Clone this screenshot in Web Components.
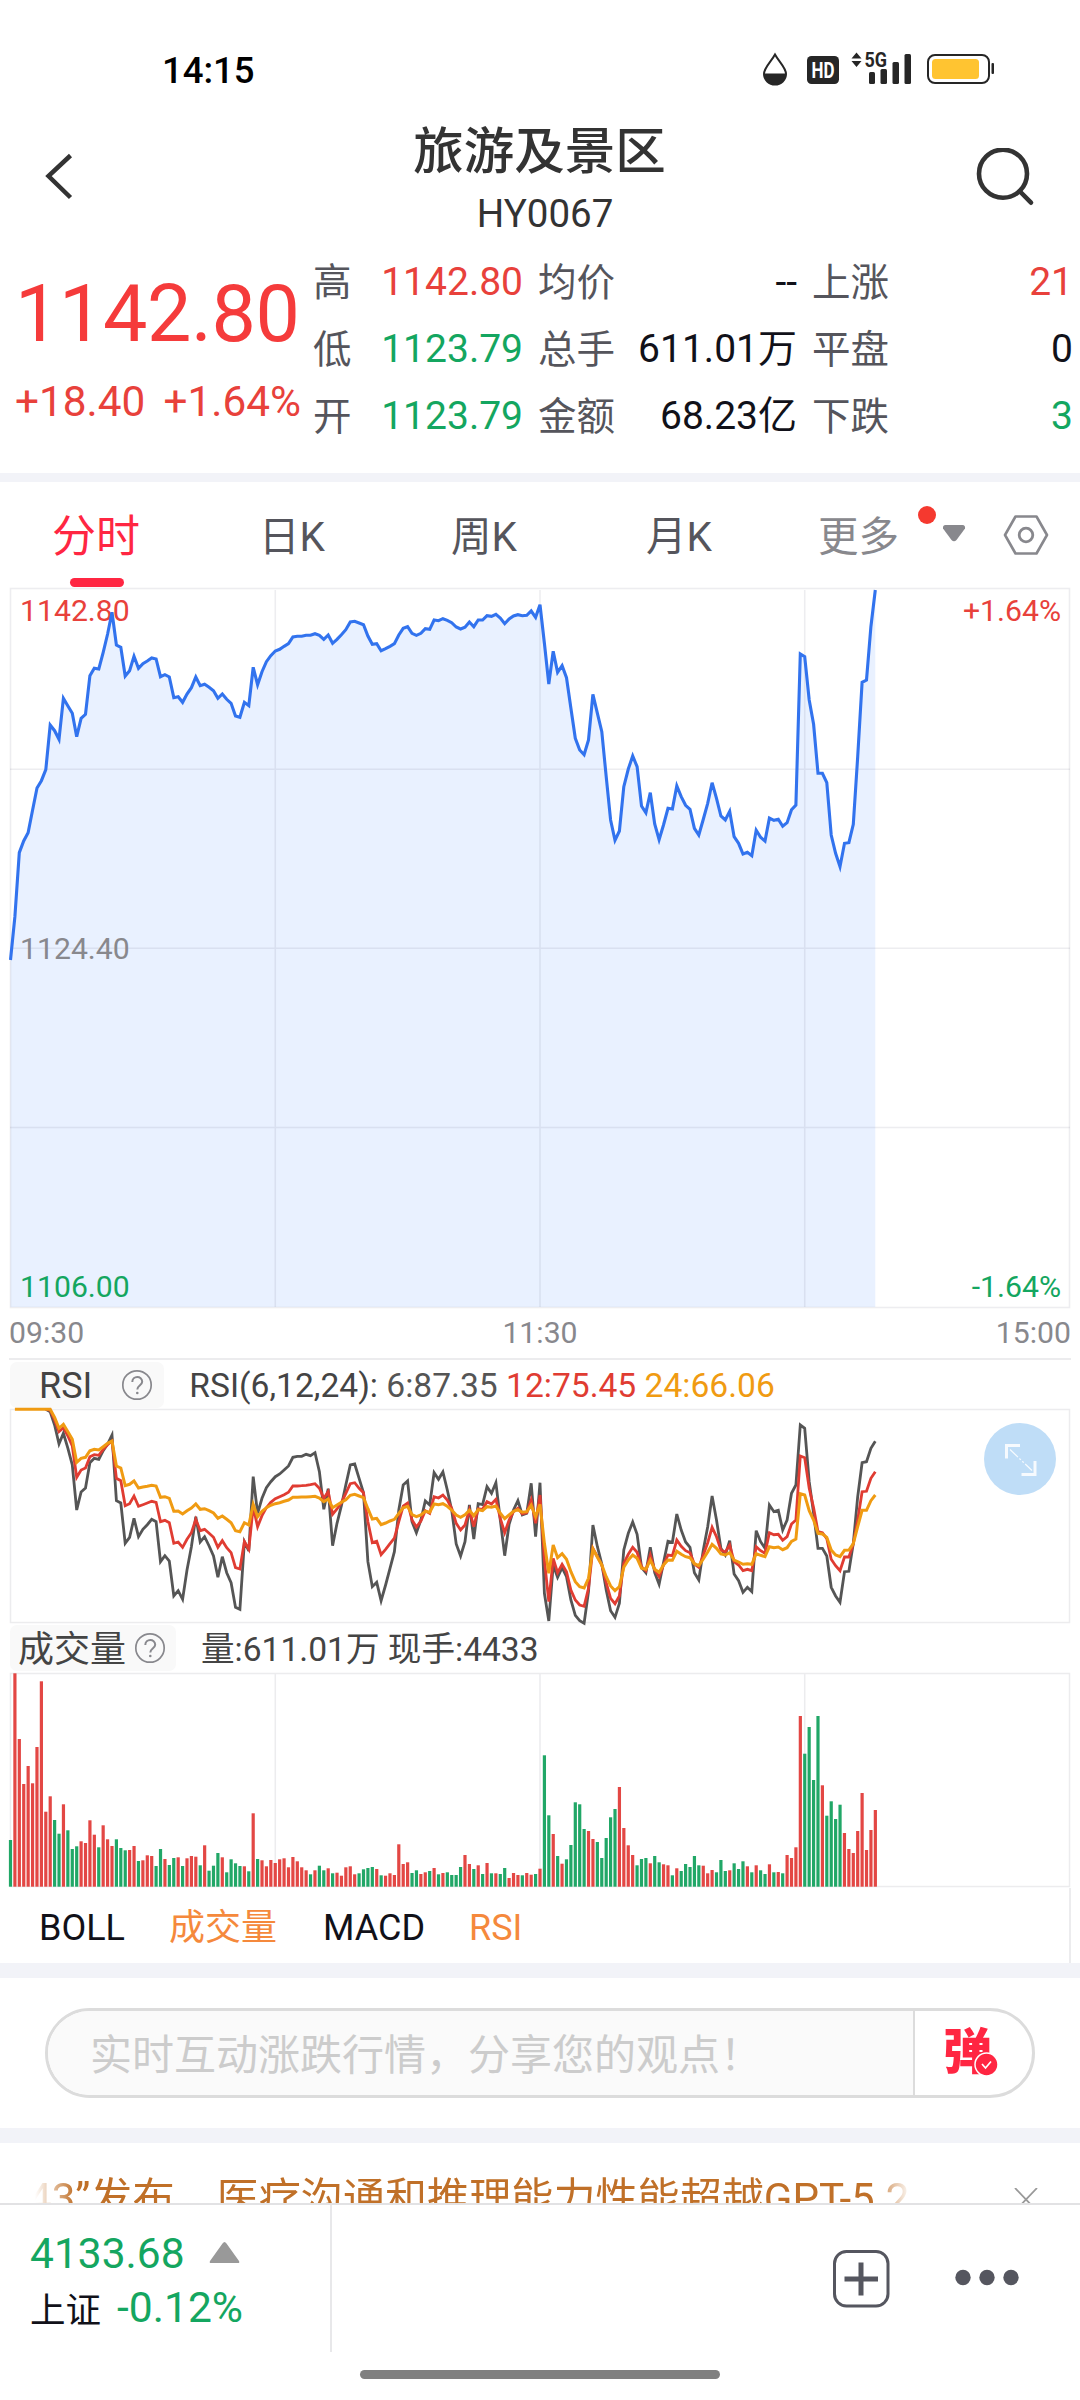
<!DOCTYPE html>
<html lang="zh-CN">
<head>
<meta charset="utf-8">
<meta name="viewport" content="width=1080">
<title>旅游及景区 HY0067</title>
<style>
html,body{margin:0;padding:0;background:#fff}
body{width:1080px;height:2400px;overflow:hidden;font-family:Roboto,"Noto Sans CJK SC",sans-serif;color:#333}
</style>
</head>
<body>
<stock-page></stock-page>
<script>
const define=(name,html,setup)=>customElements.define(name,class extends HTMLElement{
  constructor(){super();this.attachShadow({mode:'open'}).innerHTML='<style>*{box-sizing:border-box}</style>'+html}
  connectedCallback(){if(setup&&!this.ready){this.ready=true;setup(this,this.shadowRoot)}}
});
const nums=s=>s.trim().split(/[\s,]+/).map(Number);
const STEP=4.4125,X0=10.5;
const line=(vals,start)=>vals.map((v,i)=>(X0+STEP*(i+start)).toFixed(1)+','+(v/3).toFixed(1)).join(' ');

const PRICE=nums(`1140 1010 818 783 758 690 624 602 569 435 452 478 355 378 400 470 415 403 287 265 267 217 162 97 195 202 288 272 229 265
251 243 234 237 290 284 291 353 350 367 342 323 291 317 313 322 332 355 342 358 370 408 412 367 377 262 314 275 245 227
213 208 199 191 171 169 169 166 166 161 166 178 165 190 178 164 149 126 124 129 134 168 193 191 212 206 199 191 165 145
140 160 166 160 146 148 120 122 116 121 128 141 147 142 126 140 120 120 107 109 103 114 131 117 108 104 107 106 93 112
74 190 312 214 277 257 293 385 475 510 524 480 343 400 455 590 720 781 753 620 567 528 560 678 698 638 732 779 735 685
687 618 650 676 688 745 765 718 670 608 655 708 720 694 770 790 822 817 827 751 772 783 714 721 718 739 728 689 675 222
230 360 433 580 580 608 765 820 860 790 788 733 530 307 300 140 30`);
const RSI24=nums(`208 208 208 208 208 208 208 208 208 232 265 253 275 298 367 355 352 332 328 330 320 310 303 378 384 437 433 423 444
441 439 436 438 472 470 475 514 513 522 512 504 492 508 506 512 519 535 528 538 548 572 575 548 555 493 530 514 503 496
491 488 484 480 472 472 471 471 470 469 474 485 477 503 495 487 479 466 463 468 473 506 537 535 554 549 543 538 520 503
499 524 530 525 514 517 492 494 491 499 510 525 532 524 511 527 509 512 500 502 498 520 536 525 514 509 517 515 496 530
493 610 700 615 653 641 658 695 725 740 744 715 627 652 675 710 738 752 740 682 660 645 655 685 688 660 688 697 675 660
661 634 643 650 653 671 677 657 636 613 625 642 645 638 660 666 673 671 673 641 646 650 620 623 621 629 623 604 597 461
465 512 540 580 582 592 630 645 650 631 630 611 560 511 511 482 465`);
const RSI12=nums(`208 210 240 275 263 288 318 412 390 384 350 344 346 328 314 303 415 422 497 491 468 499
494 489 484 487 545 541 548 610 606 622 598 578 538 572 568 580 592 622 602 623 638 683 687 605 628 500 560 527 503 487
476 470 464 457 438 438 437 436 434 431 445 475 455 523 507 488 460 431 428 445 458 545 608 604 644 628 611 594 545 498
489 540 561 543 512 520 470 474 465 480 505 550 570 555 510 560 506 508 485 492 478 535 578 540 515 505 522 518 480 550
465 660 785 655 698 673 695 750 780 795 799 745 625 650 675 728 775 791 768 670 643 622 637 680 692 645 690 710 675 645
647 600 619 632 638 672 682 645 608 562 590 630 636 615 665 675 692 688 692 620 632 640 578 584 583 601 590 552 540 348
353 445 503 575 578 596 658 677 692 651 651 612 540 455 454 415 395`);
const RSI6=nums(`208 215 255 312 280 325 375 510 456 444 368 355 358 332 312 285 482 489 610 592 535 590
568 554 538 545 665 647 663 768 752 778 690 620 530 606 590 618 648 712 650 698 728 802 808 605 633 410 520 475 443 425
410 402 390 378 352 349 349 343 347 338 395 508 446 617 550 497 435 375 372 415 458 665 740 727 782 735 685 635 510 435
423 545 578 540 483 495 398 418 396 450 510 612 648 605 495 597 491 494 440 460 428 540 647 553 510 482 525 520 430 590
428 760 843 675 712 683 710 780 826 842 850 755 555 620 672 750 812 832 790 630 580 546 583 682 698 622 698 733 668 604
607 522 570 606 622 698 720 630 560 468 540 625 645 602 702 722 757 742 755 572 605 625 495 515 511 570 540 460 435 255
265 425 520 625 625 648 742 768 787 695 694 610 470 368 365 325 304`);
const VOL=`g690 r190 r387 r522 r468 r520 r411 r214 r605 r559 g630 g671 r583 g661 g717 g709 r694 r699 r631 r674 g712 r646 r688 r708 g688 g714 g721 r720 r708 g753
r751 r736 r738 g768 g717 r747 g765 g744 r742 g768 r745 r738 r740 g766 r706 g782 g767 g729 r742 g787 g748 g760 g768 r769 g784 r610 g747 r751 r769 r750
r759 r748 r745 r772 r741 r754 r772 r781 g793 r781 g767 g781 r775 g790 r788 r797 r772 r769 r793 g790 g778 g774 g771 r777 g796 r797 r790 r795 r703 r762
r757 g789 g781 r792 r787 g783 r774 g793 r789 g787 g795 g795 g771 r735 r762 g777 r766 g792 r759 g790 r790 g792 g774 r804 r789 r795 g796 r789 r794 g792
r776 g436 g616 r672 g738 r761 g748 g705 g577 g583 g657 r663 r687 g696 g744 g684 g622 g597 r531 r654 r706 r735 g766 g747 g744 r760 g738 g757 r763 r766
g796 r775 g783 g762 g771 g738 g766 r767 r790 r780 g787 g750 g783 r781 g760 g777 g754 r769 g787 r766 g781 g792 r763 g787 r786 g790 r735 r744 r712 r318
g431 g351 g510 g318 r526 g617 g574 g627 g584 r669 r717 r729 r663 r549 r720 r660 r600`.trim().split(/\s+/);

define('status-bar',`<style>
:host{display:flex;height:100px;padding:40px 83px 0 162px;align-items:center;justify-content:space-between;font-size:36.500px;font-weight:500;color:#000}
svg{display:block;overflow:visible}</style>
<span>14:15</span>
<svg width="237" height="40" viewBox="760 50 237 40" fill="#262626" font-family="Roboto" font-weight="700">
<path d="M775 54.500C771 62 764 67.500 764 74a11 10.500 0 0 0 22 0C786 67.500 779 62 775 54.500Z" fill="none" stroke="#262626" stroke-width="2"/><path d="M764 73.500h22a11 11 0 0 1-22 0Z"/>
<rect x="807" y="56" width="32" height="28" rx="4.500"/><text x="823" y="78" font-size="22" text-anchor="middle" fill="#fff" textLength="23" lengthAdjust="spacingAndGlyphs">HD</text>
<path d="M851.500 58.500l5-6 5 6ZM851.500 61l5 6 5-6Z"/><text x="864.500" y="67" font-size="20" textLength="22.500" lengthAdjust="spacingAndGlyphs">5G</text>
<rect x="869" y="72" width="6" height="12" rx="1.500"/><rect x="880.500" y="69" width="6.500" height="15" rx="1.500"/><rect x="892.500" y="62" width="6.500" height="22" rx="1.500"/><rect x="904.500" y="54" width="6.500" height="30" rx="1.500"/>
<rect x="928" y="55" width="61" height="28" rx="7" fill="none" stroke="#262626" stroke-width="2"/><rect x="932" y="59" width="47" height="20" rx="3.500" fill="#ffc431"/><rect x="991.500" y="63" width="2.500" height="11" rx="1"/>
</svg>`);

define('nav-header',`<style>
:host{display:flex;height:140px;justify-content:space-between;align-items:flex-start;padding:0 45px 0 43px;color:#333}
.t{display:flex;flex-direction:column;align-items:center;width:300px}
.n{font-size:50.500px;font-weight:500;line-height:60px;margin:22px 0 0 1px}.c{font-size:38.500px;line-height:46px;margin:9px 0 0 12px}
svg{display:block;margin-top:48px}</style>
<svg width="60" height="60" viewBox="43 148 60 60" fill="none" stroke="#333" stroke-width="4.500"><path d="M70.500 155.500L48.500 176l22 21.500"/></svg>
<div class="t"><div class="n"><slot></slot></div><div class="c"><slot name="code"></slot></div></div>
<svg width="60" height="60" viewBox="975 148 60 60" fill="none" stroke="#333" stroke-width="4.600" stroke-linecap="round"><circle cx="1003" cy="173.700" r="24"/><path d="M1020 191.500l11 11.200"/></svg>`);

define('quote-cell',`<style>
:host{display:flex;justify-content:space-between;height:67px;line-height:67px;font-size:38.500px;color:#55555c}
b{font-weight:400;font-size:39px;color:var(--v,#111119)}:host([up]){--v:#e8413b}:host([down]){--v:#14a660}</style>
<span><slot></slot></span><b></b>`,(h,r)=>r.querySelector('b').textContent=h.getAttribute('value'));

define('quote-panel',`<style>
:host{display:flex;height:233px;padding:9px 6px 0 15px}
.l{width:298px;color:#f53b3b;flex:none}.p{font-size:79px;line-height:90px;margin:20px 0 0;letter-spacing:-.4px}
.d{display:flex;justify-content:space-between;font-size:42.300px;line-height:50px;margin-top:18px;color:#e8413b;width:286px}
.g{display:grid;grid-template-columns:210px 259px 261px;column-gap:15px;grid-auto-rows:67px}</style>
<div class="l"><div class="p">1142.80</div><div class="d"><span>+18.40</span><span>+1.64%</span></div></div>
<div class="g">
<quote-cell up value="1142.80">高</quote-cell><quote-cell value="--">均价</quote-cell><quote-cell up value="21">上涨</quote-cell>
<quote-cell down value="1123.79">低</quote-cell><quote-cell value="611.01万">总手</quote-cell><quote-cell value="0">平盘</quote-cell>
<quote-cell down value="1123.79">开</quote-cell><quote-cell value="68.23亿">金额</quote-cell><quote-cell down value="3">下跌</quote-cell>
</div>`);

define('gap-band',`<style>:host{display:block;height:15px;background:#f2f3f8}</style>`);

define('period-tabs',`<style>
:host{display:flex;height:106px;padding:0 26px 0 52px;align-items:flex-start;color:#55555c;font-size:40.500px;line-height:111px}
span{display:block;white-space:nowrap;flex:none}.a{color:#ff2642;font-size:44px;width:207px;position:relative}
.a:after{content:"";position:absolute;left:18px;top:96px;width:54px;height:9px;border-radius:5px;background:#ff2642}
.m{width:99px;color:#88888d}svg{display:block;flex:none}</style>
<span class="a">分时</span><span style="width:192px">日K</span><span style="width:195px">周K</span><span style="width:172px">月K</span><span class="m">更多</span>
<svg width="140" height="106" viewBox="917 482 140 106"><circle cx="927" cy="515" r="9" fill="#f5392f"/><path d="M945.500 525h17q3 0 2.500 3.500l-8.500 11.500q-2.500 2.500-5 0l-8.500-11.500q-.5-3.500 2.500-3.500Z" fill="#88888d"/>
<path d="M1015.500 516.500h21l10.500 18.500-10.500 18.500h-21L1005 535Z" fill="none" stroke="#88888d" stroke-width="2.600" stroke-linejoin="round"/><circle cx="1026" cy="535" r="6.800" fill="none" stroke="#88888d" stroke-width="2.800"/></svg>`);

define('price-chart',`<style>:host{display:block;height:770px;font-size:30.200px}svg{display:block;overflow:visible}</style><svg width="1080" height="770" viewBox="0 588 1080 770"></svg>`,(h,r)=>{
  const p=line(PRICE,0);
  r.querySelector('svg').innerHTML=`<g transform="translate(0 580)"><polygon points="10.5,727 ${p} 875.3,727" fill="#e9f1ff"/></g>
  <g fill="none" stroke="#5a5a78" stroke-opacity=".11" stroke-width="1.600"><rect x="10.500" y="588.500" width="1059" height="719"/><path d="M10 769.300H1070M10 948.300H1070M10 1127.500H1070M275.300 590V1307M540 590V1307M804.700 590V1307"/></g>
  <g><text x="20" y="621" fill="#e8413b">1142.80</text><text x="20" y="959" fill="#88888d">1124.40</text><text x="20" y="1297" fill="#14a660">1106.00</text>
  <text x="1061" y="621" text-anchor="end" fill="#e8413b">+1.64%</text><text x="1061" y="1297" text-anchor="end" fill="#14a660">-1.64%</text></g>
  <g transform="translate(0 580)"><polyline points="${p}" fill="none" stroke="#3273ee" stroke-width="3.100"/></g>
  <g fill="#88888d"><text x="9" y="1343">09:30</text><text x="540" y="1343" text-anchor="middle">11:30</text><text x="1071" y="1343" text-anchor="end">15:00</text></g>`;
});

define('indicator-head',`<style>
:host{display:flex;align-items:center;height:51px;margin-left:10px;font-size:33.600px;color:#444;white-space:pre}
.b{display:flex;align-items:center;height:46px;background:#f9f9f9;border-radius:7px;font-size:36px}svg{display:block}
.i{line-height:46px;padding-top:2px}</style>
<div class="b"><span class="i n"></span><svg width="32" height="32" viewBox="-16 -16 32 32" fill="none" stroke="#88888d" stroke-width="1.700"><circle r="14.200"/><path d="M-4.700-3C-4.700-9.500 5.200-9.500 5.200-3.200C5.200 0 .3.500.3 4.500" stroke-width="2"/><circle cy="8" cx=".3" r="1.300" fill="#88888d" stroke="none"/></svg></div><span class="i x"><slot></slot></span>`,(h,r)=>{
  const [pad,gap,end,off,drop]=h.getAttribute('metrics').split(' ');
  r.querySelector('.n').textContent=h.getAttribute('name');
  r.querySelector('.b').style.cssText=`padding-left:${pad}px;padding-right:${end}px;gap:${gap}px`;
  r.querySelector('.x').style.marginLeft=off+'px';
  r.querySelectorAll('.i').forEach(e=>e.style.paddingTop=drop+'px');
});

define('rsi-chart',`<style>:host{display:block;height:214px}svg{display:block;overflow:visible}</style><svg width="1080" height="214" viewBox="0 1409 1080 214"></svg>`,(h,r)=>{
  const l=(v,s,c)=>`<polyline points="${line(v,s)}" stroke="${c}"/>`;
  r.querySelector('svg').innerHTML=`<rect x="10.500" y="1409.500" width="1059" height="213" fill="none" stroke="#ececee" stroke-width="1.500"/>
  <g transform="translate(0 1340)" fill="none" stroke-width="2.800">${l(RSI6,8,'#555')}${l(RSI12,8,'#e03c32')}<g stroke-width="3">${l(RSI24,1,'#f09b12')}</g></g>
  <circle cx="1020" cy="1459" r="36" fill="#bfddf7"/><g fill="none" stroke="#fff" stroke-opacity=".85" stroke-width="3"><path d="M1020 1445.500H1006.500V1458.500M1021.500 1474.500H1035V1461"/><path d="M1010 1449.500l22 21" stroke-width="1.300" stroke-dasharray="11 2 2 2 2 2"/></g>`;
});

define('volume-chart',`<style>:host{display:block;height:215px}svg{display:block;overflow:visible}</style><svg width="1080" height="215" viewBox="0 1673 1080 215"></svg>`,(h,r)=>{
  r.querySelector('svg').innerHTML=`<g fill="none" stroke="#ececee" stroke-width="1.500"><rect x="10.500" y="1673.500" width="1059" height="213"/><path d="M275.300 1674V1886M540 1674V1886M804.700 1674V1886"/></g>`+
  VOL.map((t,i)=>{const y=1610+t.slice(1)/3;return `<rect x="${(X0+STEP*i-1.6).toFixed(2)}" y="${y.toFixed(1)}" width="3.200" height="${(1886.7-y).toFixed(1)}" fill="${t[0]=='r'?'#e34744':'#21a767'}"/>`}).join('');
});

define('indicator-tabs',`<style>
:host{display:flex;height:75px;width:1071px;border-right:2px solid #ececee;padding-left:39px;line-height:80px;font-size:36px;color:#111119;align-items:flex-start}
.o{color:#f5893c}span{display:block}</style>
<span style="width:130px">BOLL</span><span class="o" style="width:154px">成交量</span><span style="width:146px">MACD</span><span class="o">RSI</span>`);

define('comment-box',`<style>
:host{display:flex;height:150px;align-items:center;padding:0 45px}
.p{display:flex;flex:1;height:90px;border:3px solid #dcdcdc;border-radius:45px;overflow:hidden}
.i{width:867px;background:#fafafa;border-right:2px solid #dcdcdc;padding-left:42px;line-height:90px;font-size:42px;color:#ccc;white-space:nowrap}
.e{position:relative;flex:1;color:#ff2642;font-size:49px;font-weight:900;line-height:84px;padding-left:28px}
svg{position:absolute;left:59px;top:41px}</style>
<div class="p"><div class="i">实时互动涨跌行情，分享您的观点！</div><div class="e">弹<svg width="25" height="25" viewBox="-12.500 -12.500 25 25"><circle r="11.500" fill="#ff2642" stroke="#fff" stroke-width="1.500"/><path d="M-4.500-.5l3.500 4 5.500-6.500" fill="none" stroke="#fff" stroke-width="1.700"/></svg></div></div>`);

define('news-ticker',`<style>
:host{display:flex;height:60px;overflow:hidden;padding-left:35px;color:#c07028;font-size:42.100px}
.m{width:876px;height:120px;line-height:112px;white-space:nowrap;overflow:hidden;-webkit-mask:linear-gradient(90deg,transparent 0,#000 40px,#000 836px,transparent 876px);mask:linear-gradient(90deg,transparent 0,#000 40px,#000 836px,transparent 876px)}
span{display:block;margin-left:-7px}svg{display:block;margin:45px 0 0 103px}</style>
<div class="m"><span>43”发布，医疗沟通和推理能力性能超越GPT-5.2</span></div>
<svg width="24" height="24" viewBox="0 0 24 24" stroke="#999" stroke-width="1.800"><path d="M1 0l22 23M23 0L1 23"/></svg>`);

define('bottom-bar',`<style>
:host{display:flex;flex-direction:column;height:197px;border-top:2px solid #e2e2e4;background:#fff}
.r{display:flex;height:147px}.q{width:332px;border-right:2px solid #e8e8ea;padding:23px 0 0 30px;color:#14a660;font-size:42.500px}
.a,.b{display:flex;align-items:center;height:50px}.a{gap:24px}.b{gap:16px;margin-top:4px}.b span:first-child{font-size:35.500px;color:#111119}.b span:last-child{font-size:42.600px}
.s{margin-left:496px;display:block}.h{width:360px;height:9px;border-radius:5px;background:#808080;margin:18px auto 0}</style>
<div class="r"><div class="q"><div class="a"><span>4133.68</span><svg width="31" height="21" viewBox="0 0 31 21" style="margin-top:-2px"><path d="M15.500 0q1 0 2 1.500L30 19q1 2-1 2H2q-2 0-1-2L13.500 1.500Q14.500 0 15.500 0Z" fill="#999"/></svg></div><div class="b"><span>上证</span><span>-0.12%</span></div></div>
<svg class="s" width="200" height="147" viewBox="828 2205 200 147" fill="none" stroke="#55565f"><rect x="834.500" y="2251.500" width="53.500" height="54.500" rx="12" stroke-width="3"/><path d="M844.500 2279h33.500M861 2262.500v33" stroke-width="5"/><g fill="#55565f" stroke="none"><circle cx="963" cy="2277.500" r="7.700"/><circle cx="987" cy="2277.500" r="7.700"/><circle cx="1011" cy="2277.500" r="7.700"/></g></svg></div>
<div class="h"></div>`);

define('stock-page',`<style>
:host{display:flex;flex-direction:column;width:1080px;height:2400px}
.rule{height:2px;margin:0 9px;background:#ececee}</style>
<status-bar></status-bar>
<nav-header>旅游及景区<span slot="code">HY0067</span></nav-header>
<quote-panel></quote-panel>
<gap-band style="height:9px"></gap-band>
<period-tabs></period-tabs>
<price-chart></price-chart>
<div class="rule"></div>
<indicator-head style="height:49px" name="RSI" metrics="29 29 11 25 2">RSI(6,12,24): <span style="color:#555">6:87.35</span> <span style="color:#e03c32">12:75.45</span> <span style="color:#f09b12">24:66.06</span></indicator-head>
<rsi-chart></rsi-chart>
<indicator-head style="height:50px" name="成交量" metrics="8 8 10 25 4">量:611.01万 现手:4433</indicator-head>
<volume-chart></volume-chart>
<indicator-tabs></indicator-tabs>
<gap-band></gap-band>
<comment-box></comment-box>
<gap-band></gap-band>
<news-ticker></news-ticker>
<bottom-bar></bottom-bar>`);
</script>
</body>
</html>
